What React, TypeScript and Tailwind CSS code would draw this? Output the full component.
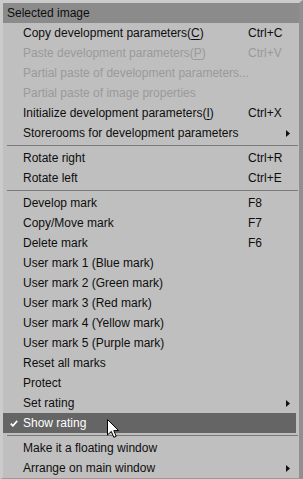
import React from "react"

type Item =
  | { kind: "sep" }
  | {
      kind: "item"
      label: React.ReactNode
      shortcut?: string
      disabled?: boolean
      submenu?: boolean
      checked?: boolean
      active?: boolean
    }

const U = ({ children }: { children: React.ReactNode }) => <span className="underline underline-offset-2">{children}</span>

const items: Item[] = [
  { kind: "item", label: <>Copy development parameters(<U>C</U>)</>, shortcut: "Ctrl+C" },
  { kind: "item", label: <>Paste development parameters(<U>P</U>)</>, shortcut: "Ctrl+V", disabled: true },
  { kind: "item", label: "Partial paste of development parameters...", disabled: true },
  { kind: "item", label: "Partial paste of image properties", disabled: true },
  { kind: "item", label: <>Initialize development parameters(<U>I</U>)</>, shortcut: "Ctrl+X" },
  { kind: "item", label: "Storerooms for development parameters", submenu: true },
  { kind: "sep" },
  { kind: "item", label: "Rotate right", shortcut: "Ctrl+R" },
  { kind: "item", label: "Rotate left", shortcut: "Ctrl+E" },
  { kind: "sep" },
  { kind: "item", label: "Develop mark", shortcut: "F8" },
  { kind: "item", label: "Copy/Move mark", shortcut: "F7" },
  { kind: "item", label: "Delete mark", shortcut: "F6" },
  { kind: "item", label: "User mark 1 (Blue mark)" },
  { kind: "item", label: "User mark 2 (Green mark)" },
  { kind: "item", label: "User mark 3 (Red mark)" },
  { kind: "item", label: "User mark 4 (Yellow mark)" },
  { kind: "item", label: "User mark 5 (Purple mark)" },
  { kind: "item", label: "Reset all marks" },
  { kind: "item", label: "Protect" },
  { kind: "item", label: "Set rating", submenu: true },
  { kind: "item", label: "Show rating", checked: true, active: true },
  { kind: "sep" },
  { kind: "item", label: "Make it a floating window" },
  { kind: "item", label: "Arrange on main window", submenu: true },
]

function Arrow() {
  return (
    <svg width="4" height="7" viewBox="0 0 4 7" className="block">
      <path d="M0 0 L4 3.5 L0 7 Z" fill="#111" />
    </svg>
  )
}

function Check() {
  return (
    <svg width="8" height="7" viewBox="0 0 8 7" className="block">
      <path d="M0.8 3.6 L2.9 5.8 L7.2 0.9" fill="none" stroke="#fff" strokeWidth="1.7" />
    </svg>
  )
}

export default function App() {
  return (
    <div
      className="relative w-[303px] h-[479px] overflow-hidden bg-[#bfbfbf] border-t-[3px] border-l-[3px] border-r-[4px] border-b-[1px] border-t-[#cbcbcb] border-l-[#cbcbcb] border-r-[#8f8f8f] border-b-[#9a9a9a] text-[12px] text-[#0e0e0e]"
      style={{ fontFamily: '"Liberation Sans", Arial, sans-serif' }}
    >
      <div className="h-[20px] bg-[#8b8b8b] flex items-center pl-[4px] text-[#0e0e0e]">Selected image</div>
      {items.map((it, i) =>
        it.kind === "sep" ? (
          <div key={i} className="h-[5px] pt-[2px] pl-[4px] pr-[1px]">
            <div className="h-px bg-[#7a7a7a]" />
          </div>
        ) : (
          <div
            key={i}
            className={
              "h-[20px] flex items-center pl-[20px] pr-[9px] " +
              (it.active ? "bg-[#656565] text-white mr-[3px] pr-[6px] " : "") +
              (it.disabled ? "text-[#9a9a9a]" : "")
            }
          >
            {it.checked && (
              <span className="w-0 relative -left-[13px]">
                <Check />
              </span>
            )}
            <span className="flex-1 whitespace-nowrap">{it.label}</span>
            {it.shortcut && <span className="w-[42px] whitespace-nowrap">{it.shortcut}</span>}
            {it.submenu && (
              <span className="w-[4px] flex justify-start">
                <Arrow />
              </span>
            )}
          </div>
        )
      )}
      <svg width="13" height="20" viewBox="0 0 13 20" className="absolute left-[104px] top-[416px]">
        <path d="M0.5 0.5 L0.5 16 L4.3 12.4 L6.8 18.3 L9.2 17.3 L6.8 11.6 L11.6 11.6 Z" fill="#fff" stroke="#000" strokeWidth="1" />
      </svg>
    </div>
  )
}
